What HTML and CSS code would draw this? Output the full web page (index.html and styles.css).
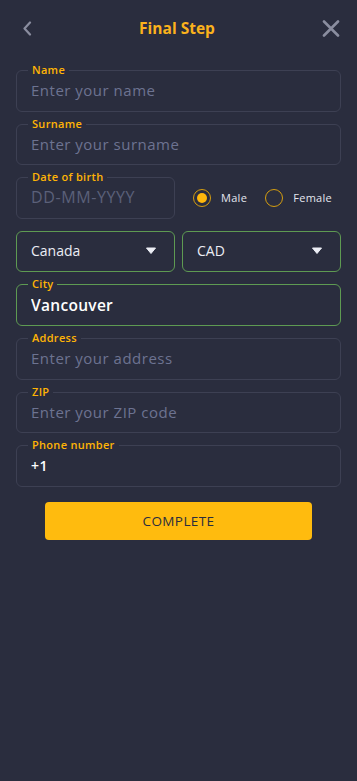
FILE: index.html
```html
<!DOCTYPE html>
<html lang="en">
<head>
    <meta charset="UTF-8">
    <meta name="viewport" content="width=device-width, initial-scale=1.0">
    <title>Final Step</title>
    <link rel="stylesheet" href="styles.css">
</head>
<body>
    <div class="screen">
        <header class="top-bar">
            <button class="icon-btn" aria-label="Back">
                <svg width="10" height="15" viewBox="0 0 10 15">
                    <path d="M8 1.5 L2.5 7.5 L8 13.5" fill="none" stroke="#8a8d9f" stroke-width="2.2" stroke-linecap="round" stroke-linejoin="round"/>
                </svg>
            </button>
            <h1>Final Step</h1>
            <button class="icon-btn" aria-label="Close">
                <svg width="18" height="17" viewBox="0 0 18 17">
                    <path d="M2 1.5 L16 15.5 M16 1.5 L2 15.5" fill="none" stroke="#8a8d9f" stroke-width="2.6" stroke-linecap="round"/>
                </svg>
            </button>
        </header>

        <form class="form">
            <div class="field">
                <label for="name">Name</label>
                <input type="text" id="name" placeholder="Enter your name">
            </div>

            <div class="field">
                <label for="surname">Surname</label>
                <input type="text" id="surname" placeholder="Enter your surname">
            </div>

            <div class="row">
                <div class="field half">
                    <label for="dob">Date of birth</label>
                    <input type="text" id="dob" class="dob" placeholder="DD-MM-YYYY">
                </div>
                <div class="gender">
                    <span class="radio checked"><span class="dot"></span></span>
                    <span class="radio-label">Male</span>
                    <span class="radio"></span>
                    <span class="radio-label">Female</span>
                </div>
            </div>

            <div class="row">
                <div class="field half select valid">
                    <span>Canada</span>
                    <svg width="12" height="8" viewBox="0 0 12 8"><path d="M1.5 1 H10.5 L6 6.5 Z" fill="#eceef5" stroke="#eceef5" stroke-width="1" stroke-linejoin="round"/></svg>
                </div>
                <div class="field half select valid">
                    <span>CAD</span>
                    <svg width="12" height="8" viewBox="0 0 12 8"><path d="M1.5 1 H10.5 L6 6.5 Z" fill="#eceef5" stroke="#eceef5" stroke-width="1" stroke-linejoin="round"/></svg>
                </div>
            </div>

            <div class="field valid">
                <label for="city">City</label>
                <input type="text" id="city" class="filled" value="Vancouver">
            </div>

            <div class="field">
                <label for="address">Address</label>
                <input type="text" id="address" placeholder="Enter your address">
            </div>

            <div class="field">
                <label for="zip">ZIP</label>
                <input type="text" id="zip" placeholder="Enter your ZIP code">
            </div>

            <div class="field">
                <label for="phone">Phone number</label>
                <input type="text" id="phone" class="phone" value="+1">
            </div>

            <button type="button" class="complete">COMPLETE</button>
        </form>
    </div>
</body>
</html>
```

FILE: styles.css
```css
body {
    margin: 0;
    background-color: #2a2d3e;
    font-family: "Open Sans", sans-serif;
}

.screen {
    min-height: 781px;
    background-color: #2a2d3e;
}

.top-bar {
    height: 56px;
    display: flex;
    align-items: center;
    justify-content: space-between;
    padding: 0 17px 0 22px;
}

.top-bar h1 {
    margin: 0;
    font-size: 15.5px;
    font-weight: 700;
    color: #fbb21c;
}

.icon-btn {
    background: none;
    border: none;
    padding: 0;
    display: flex;
    align-items: center;
    cursor: pointer;
}

.form {
    padding: 14px 16px 0 16px;
    display: flex;
    flex-direction: column;
    gap: 12px;
}

.field {
    position: relative;
    height: 41.6px;
    box-sizing: border-box;
    border: 1px solid #3d4053;
    border-radius: 6px;
    display: flex;
    align-items: center;
}

.field.valid {
    border-color: #5e9a52;
}

.field label {
    position: absolute;
    top: -8px;
    left: 11px;
    padding: 0 4px;
    background-color: #2a2d3e;
    color: #ffb405;
    font-size: 11px;
    font-weight: 600;
    line-height: 14px;
    letter-spacing: 0.3px;
}

.field input {
    width: 100%;
    height: 100%;
    box-sizing: border-box;
    background: transparent;
    border: none;
    outline: none;
    padding: 0 14px 1px 14px;
    font-family: "Open Sans", sans-serif;
    font-size: 15px;
    letter-spacing: 0.5px;
    color: #ffffff;
}

.field input::placeholder {
    color: #6d7391;
}

.field input.filled {
    font-size: 15.5px;
    font-weight: 600;
    letter-spacing: 0.3px;
}

.field input.phone {
    font-size: 14px;
    font-weight: 600;
}

.field input.dob {
    font-size: 16px;
    letter-spacing: 0.6px;
}

.field input.dob::placeholder {
    color: #5b6079;
}

.row {
    display: flex;
    gap: 7px;
    align-items: center;
}

.half {
    width: 159px;
    flex: none;
}

.gender {
    display: flex;
    align-items: center;
    padding-left: 11px;
    font-size: 11px;
    letter-spacing: 0.3px;
    color: #e4e6ee;
}

.radio {
    width: 18px;
    height: 18px;
    box-sizing: border-box;
    border: 1.5px solid #d59e10;
    border-radius: 50%;
    display: flex;
    align-items: center;
    justify-content: center;
}

.radio .dot {
    width: 10px;
    height: 10px;
    border-radius: 50%;
    background-color: #ffb80c;
}

.radio-label {
    margin: 0 18px 0 10px;
}

.select {
    justify-content: space-between;
    padding: 0 17px 2px 14px;
    font-size: 14px;
    color: #eceef5;
}

.complete {
    margin: 3px auto 0 auto;
    width: 267px;
    height: 38px;
    border: none;
    border-radius: 4px;
    background-color: #ffbb0e;
    color: #2a2d3e;
    font-family: "Open Sans", sans-serif;
    font-size: 13.5px;
    letter-spacing: 0.4px;
    cursor: pointer;
}
```
